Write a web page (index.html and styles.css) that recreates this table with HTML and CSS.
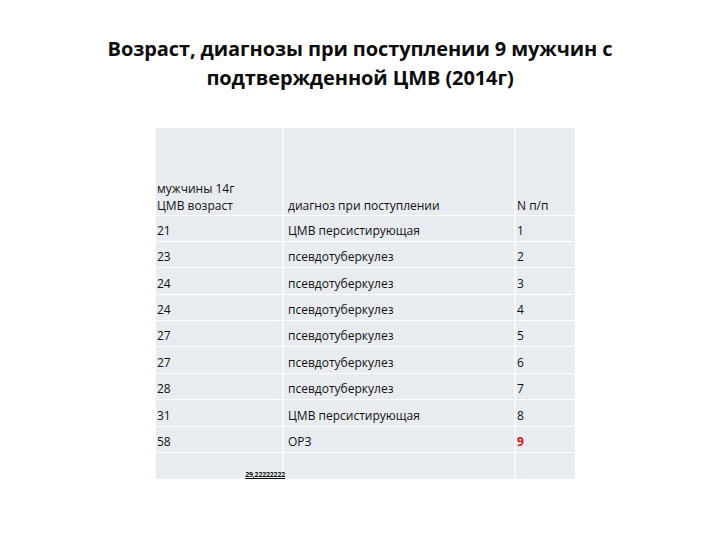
FILE: index.html
```html
<!DOCTYPE html>
<html lang="ru">
<head>
<meta charset="utf-8">
<link rel="stylesheet" href="styles.css">
</head>
<body>
<div class="slide">
  <h1 class="title">Возраст, диагнозы при поступлении 9 мужчин с<br>подтвержденной ЦМВ (2014г)</h1>
  <table class="grid">
    <tr class="head">
      <td class="c1">мужчины 14г<br>ЦМВ возраст</td>
      <td class="c2">диагноз при поступлении</td>
      <td class="c3">N п/п</td>
    </tr>
    <tr><td>21</td><td>ЦМВ персистирующая</td><td>1</td></tr>
    <tr><td>23</td><td>псевдотуберкулез</td><td>2</td></tr>
    <tr><td>24</td><td>псевдотуберкулез</td><td>3</td></tr>
    <tr><td>24</td><td>псевдотуберкулез</td><td>4</td></tr>
    <tr><td>27</td><td>псевдотуберкулез</td><td>5</td></tr>
    <tr><td>27</td><td>псевдотуберкулез</td><td>6</td></tr>
    <tr><td>28</td><td>псевдотуберкулез</td><td>7</td></tr>
    <tr><td>31</td><td>ЦМВ персистирующая</td><td>8</td></tr>
    <tr><td>58</td><td>ОРЗ</td><td class="red">9</td></tr>
    <tr class="last"><td class="avg"><span>29,22222222</span></td><td></td><td></td></tr>
  </table>
</div>
</body>
</html>
```
FILE: styles.css
```css
html, body {
  margin: 0;
  padding: 0;
  background: #ffffff;
}
.slide {
  width: 720px;
  height: 540px;
  overflow: hidden;
  font-family: "Open Sans", "Liberation Sans", sans-serif;
  color: #111111;
}
.title {
  margin: 0;
  padding-top: 34px;
  text-align: center;
  font-size: 20px;
  line-height: 29px;
  font-weight: 700;
  color: #0d0d0d;
  letter-spacing: -0.1px;
}
.grid {
  margin: 36px 0 0 156px;
  width: 419px;
  border-collapse: collapse;
  border-spacing: 0;
  background: #e8ecf0;
  font-size: 12px;
  table-layout: fixed;
}
.grid td {
  padding: 0 0 2px 1px;
  height: 26.4px;
  box-sizing: border-box;
  vertical-align: bottom;
  line-height: 17px;
  border-bottom: 1px solid #ffffff;
  border-right: 2px solid #f6f8fa;
  white-space: nowrap;
  overflow: visible;
}
.grid td:last-child {
  border-right: none;
}
.grid td:nth-child(2) {
  padding-left: 4px;
}
.grid .c1 { width: 127px; }
.grid .c2 { width: 232px; }
.grid .c3 { width: 60px; }
.grid .head td {
  height: 87px;
  padding-bottom: 1px;
}
.grid .last td {
  border-bottom: none;
  height: 26px;
}
.red {
  color: #d0121b;
  font-weight: 700;
}
.avg {
  text-align: right;
  position: relative;
}
.avg span {
  position: absolute;
  right: -3px;
  bottom: 1px;
  font-size: 7px;
  line-height: 7px;
  font-weight: 700;
  letter-spacing: -0.2px;
  text-decoration: underline;
  color: #111;
}
```
